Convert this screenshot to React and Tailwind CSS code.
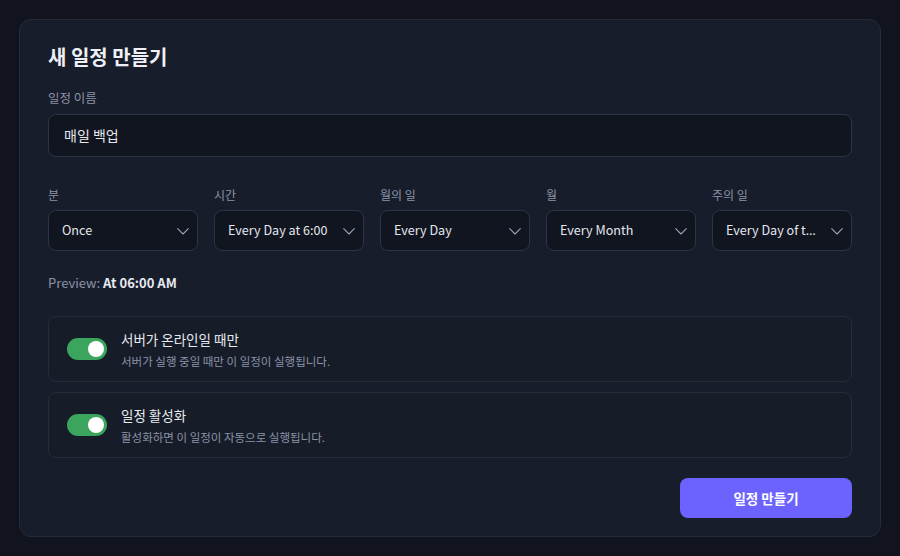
import React from "react";

const Chevron = () => (
  <svg width="16" height="16" viewBox="0 0 24 24" fill="none" stroke="#9aa3b8" strokeWidth="1.6" strokeLinecap="round" strokeLinejoin="round" className="shrink-0">
    <path d="M4 8.5l8 8 8-8" />
  </svg>
);

function Select({ label, value, ellipsis }) {
  return (
    <div className="flex flex-col min-w-0">
      <div className="text-[12px] leading-[16px] text-[#8b93a7] mb-[7px]">{label}</div>
      <div className="h-[41px] rounded-[8px] border border-[#2d3447] bg-[#111520] flex items-center pl-[13px] pr-[6px] gap-2">
        <span className="flex-1 min-w-0 whitespace-nowrap overflow-hidden text-[12.6px] text-[#e4e7ee]">
          {value}
          {ellipsis && <span style={{ fontFamily: '"Noto Sans", sans-serif' }}>…</span>}
        </span>
        <Chevron />
      </div>
    </div>
  );
}

function Toggle({ title, desc }) {
  return (
    <div className="h-[66px] rounded-[8px] border border-[#262c3c] bg-[#171c29] flex items-center pl-[18px] gap-[14px]">
      <div className="w-[40px] h-[22px] rounded-full bg-[#3ba55d] flex items-center justify-end pr-[3px] shrink-0">
        <div className="w-[16px] h-[16px] rounded-full bg-white" />
      </div>
      <div className="flex flex-col">
        <div className="text-[13.5px] leading-[20px] text-[#e6e9ef]">{title}</div>
        <div className="text-[11.5px] leading-[16px] text-[#8b93a7] mt-[4px]">{desc}</div>
      </div>
    </div>
  );
}

export default function App() {
  return (
    <div
      className="w-[900px] h-[556px] bg-[#11141e] p-[19px] pr-[19px]"
      style={{ fontFamily: '"Noto Sans CJK KR", "Noto Sans", sans-serif' }}
    >
      <div className="w-[862px] h-[518px] rounded-[12px] border border-[#252b3b] bg-[#181d2b] px-[28px] pt-[23px]">
        <h1 className="text-[20px] leading-[28px] font-bold text-[#eef0f5]">새 일정 만들기</h1>
        <div className="mt-[19px] text-[12.5px] leading-[16px] text-[#8b93a7]">일정 이름</div>
        <div className="mt-[8px] h-[43px] rounded-[8px] border border-[#2d3447] bg-[#111520] flex items-center px-[15px] text-[14px] text-[#e4e7ee]">
          매일 백업
        </div>
        <div className="mt-[30px] grid grid-cols-[150px_150px_150px_150px_140px] gap-x-[16px]">
          <Select label="분" value="Once" />
          <Select label="시간" value="Every Day at 6:00" />
          <Select label="월의 일" value="Every Day" />
          <Select label="월" value="Every Month" />
          <Select label="주의 일" value="Every Day of t" ellipsis />
        </div>
        <div className="mt-[23px] text-[13px] leading-[18px] text-[#8b93a7]">
          Preview: <span className="font-bold text-[#e6e9ef]">At 06:00 AM</span>
        </div>
        <div className="mt-[24px] flex flex-col gap-[10px]">
          <Toggle title="서버가 온라인일 때만" desc="서버가 실행 중일 때만 이 일정이 실행됩니다." />
          <Toggle title="일정 활성화" desc="활성화하면 이 일정이 자동으로 실행됩니다." />
        </div>
        <div className="mt-[20px] flex justify-end">
          <button className="w-[172px] h-[40px] rounded-[8px] bg-[#6c63ff] text-white text-[13.5px] font-bold">
            일정 만들기
          </button>
        </div>
      </div>
    </div>
  );
}
